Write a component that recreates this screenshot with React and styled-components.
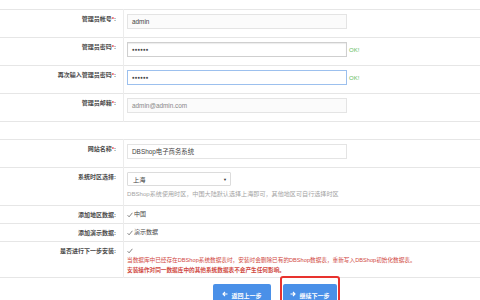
import React from 'react'
import styled, { createGlobalStyle } from 'styled-components'

const Global = createGlobalStyle`
  html, body {
    margin: 0;
    padding: 0;
    background: #fff;
    overflow: hidden;
  }
  body {
    font-family: "Liberation Sans", "Noto Sans CJK SC", sans-serif;
    color: #333;
  }
`

const Page = styled.div`
  width: 480px;
  height: 300px;
  padding-top: 9px;
  box-sizing: border-box;
  overflow: hidden;
`

const Table = styled.table`
  width: 480px;
  border-collapse: collapse;
  table-layout: fixed;
`

const Row = styled.tr`
  border-top: 1px solid #e6e6e6;
  &:last-child { border-bottom: 1px solid #e6e6e6; }
`

const Label = styled.td`
  width: 116px;
  padding: 5px 7px 0 0;
  border-right: 1px solid #ececec;
  vertical-align: top;
  text-align: right;
  font-size: 6px;
  line-height: 9px;
  font-weight: bold;
  color: #4a4a4a;
  white-space: nowrap;
`

const Star = styled.span`
  color: #e0403a;
`

const Field = styled.td`
  padding: ${p => p.$pad || '4px 0 8px 3px'};
  vertical-align: top;
`

const Line = styled.div`
  display: flex;
  align-items: center;
  gap: 2px;
`

const Input = styled.div`
  width: 220px;
  height: 15px;
  box-sizing: border-box;
  border: 1px solid ${p => (p.$focus ? '#9cc0ee' : p.$dark ? '#cfcfcf' : '#e4e4e4')};
  box-shadow: ${p => (p.$dark ? 'inset 0 1px 1px rgba(0,0,0,0.08)' : 'none')};
  background: ${p => (p.$grey ? '#fbfbfb' : '#fff')};
  padding: 0 4px;
  display: flex;
  align-items: center;
  font-size: ${p => (p.$dots ? '4.6px' : '6.4px')};
  color: ${p => (p.$muted ? '#888' : '#444')};
`

const Ok = styled.span`
  font-size: 6px;
  color: #62bd5c;
`

const Select = styled.div`
  width: 104px;
  height: 14px;
  box-sizing: border-box;
  border: 1px solid #dcdcdc;
  border-radius: 1px;
  padding: 0 3px 0 5px;
  display: flex;
  align-items: center;
  justify-content: space-between;
  font-size: 6.2px;
  color: #444;
`

const Caret = styled.span`
  font-size: 4px;
  color: #333;
`

const Help = styled.div`
  margin-top: 3px;
  font-size: 6.1px;
  line-height: 9px;
  color: #a5a5a5;
  white-space: nowrap;
`

const Check = styled.div`
  display: flex;
  align-items: center;
  gap: 1px;
  min-height: 9px;
  font-size: 6px;
  line-height: 9px;
  color: #444;
`

const Warn = styled.div`
  font-size: 5.65px;
  line-height: 10px;
  color: #d0493f;
  font-weight: ${p => (p.$bold ? 'bold' : 'normal')};
  white-space: nowrap;
`

const Spacer = styled.td`
  height: 17px;
  padding: 0;
`

const Buttons = styled.div`
  display: flex;
  align-items: flex-start;
  gap: 9px;
  padding-left: 213px;
  margin-top: -2px;
`

const Button = styled.div`
  width: ${p => p.$w}px;
  height: 20px;
  margin-top: ${p => p.$top || 0}px;
  box-sizing: border-box;
  background: #4a90e8;
  border-radius: 2px;
  color: #fff;
  font-size: 6px;
  font-weight: bold;
  display: flex;
  align-items: flex-start;
  justify-content: center;
  gap: 3px;
  padding-top: 7px;
`

const Marked = styled.div`
  border: 2px solid #e8322e;
  border-radius: 3px;
  padding: 6px 1px 0;
  height: 30px;
`

const Tick = () => (
  <svg width="6" height="6" viewBox="0 0 6 6">
    <path d="M0.6 3.2 L2.1 4.8 L5.4 0.8" fill="none" stroke="#666" strokeWidth="0.8" />
  </svg>
)

const Arrow = ({ left }) => (
  <svg width="6" height="6" viewBox="0 0 6 6">
    {left ? (
      <path d="M5.5 3 H1 M3 1 L1 3 L3 5" fill="none" stroke="#fff" strokeWidth="1.1" />
    ) : (
      <path d="M0.5 3 H5 M3 1 L5 3 L3 5" fill="none" stroke="#fff" strokeWidth="1.1" />
    )}
  </svg>
)

const Req = ({ children }) => (
  <Label>{children}<Star>*</Star>:</Label>
)

export default function App() {
  return (
    <Page>
      <Global />
      <Table>
        <tbody>
          <Row>
            <Req>管理员帐号</Req>
            <Field><Input $grey>admin</Input></Field>
          </Row>
          <Row>
            <Req>管理员密码</Req>
            <Field>
              <Line>
                <Input $dark $dots>●●●●●●</Input>
                <Ok>OK!</Ok>
              </Line>
            </Field>
          </Row>
          <Row>
            <Req>再次输入管理员密码</Req>
            <Field>
              <Line>
                <Input $focus $dots>●●●●●●</Input>
                <Ok>OK!</Ok>
              </Line>
            </Field>
          </Row>
          <Row>
            <Req>管理员邮箱</Req>
            <Field><Input $grey $muted>admin@admin.com</Input></Field>
          </Row>
          <Row>
            <Spacer colSpan={2} />
          </Row>
          <Row>
            <Req>网站名称</Req>
            <Field><Input>DBShop电子商务系统</Input></Field>
          </Row>
          <Row>
            <Label>系统时区选择:</Label>
            <Field $pad="4px 0 7px 3px">
              <Select>上海<Caret>▼</Caret></Select>
              <Help>DBShop系统使用时区，中国大陆默认选择上海即可，其他地区可自行选择时区</Help>
            </Field>
          </Row>
          <Row>
            <Label>添加地区数据:</Label>
            <Field $pad="4px 0 4px 3px"><Check><Tick />中国</Check></Field>
          </Row>
          <Row>
            <Label>添加演示数据:</Label>
            <Field $pad="4px 0 4px 3px"><Check><Tick />演示数据</Check></Field>
          </Row>
          <Row>
            <Label>是否进行下一步安装:</Label>
            <Field $pad="4px 0 2px 3px">
              <Check><Tick /></Check>
              <Warn>当数据库中已经存在DBShop系统数据表时，安装时会删除已有的DBShop数据表，重新写入DBShop初始化数据表。</Warn>
              <Warn $bold>安装操作对同一数据库中的其他系统数据表不会产生任何影响。</Warn>
            </Field>
          </Row>
        </tbody>
      </Table>
      <Buttons>
        <Button $w={58} $top={8}><Arrow left />返回上一步</Button>
        <Marked>
          <Button $w={54}><Arrow />继续下一步</Button>
        </Marked>
      </Buttons>
    </Page>
  )
}
